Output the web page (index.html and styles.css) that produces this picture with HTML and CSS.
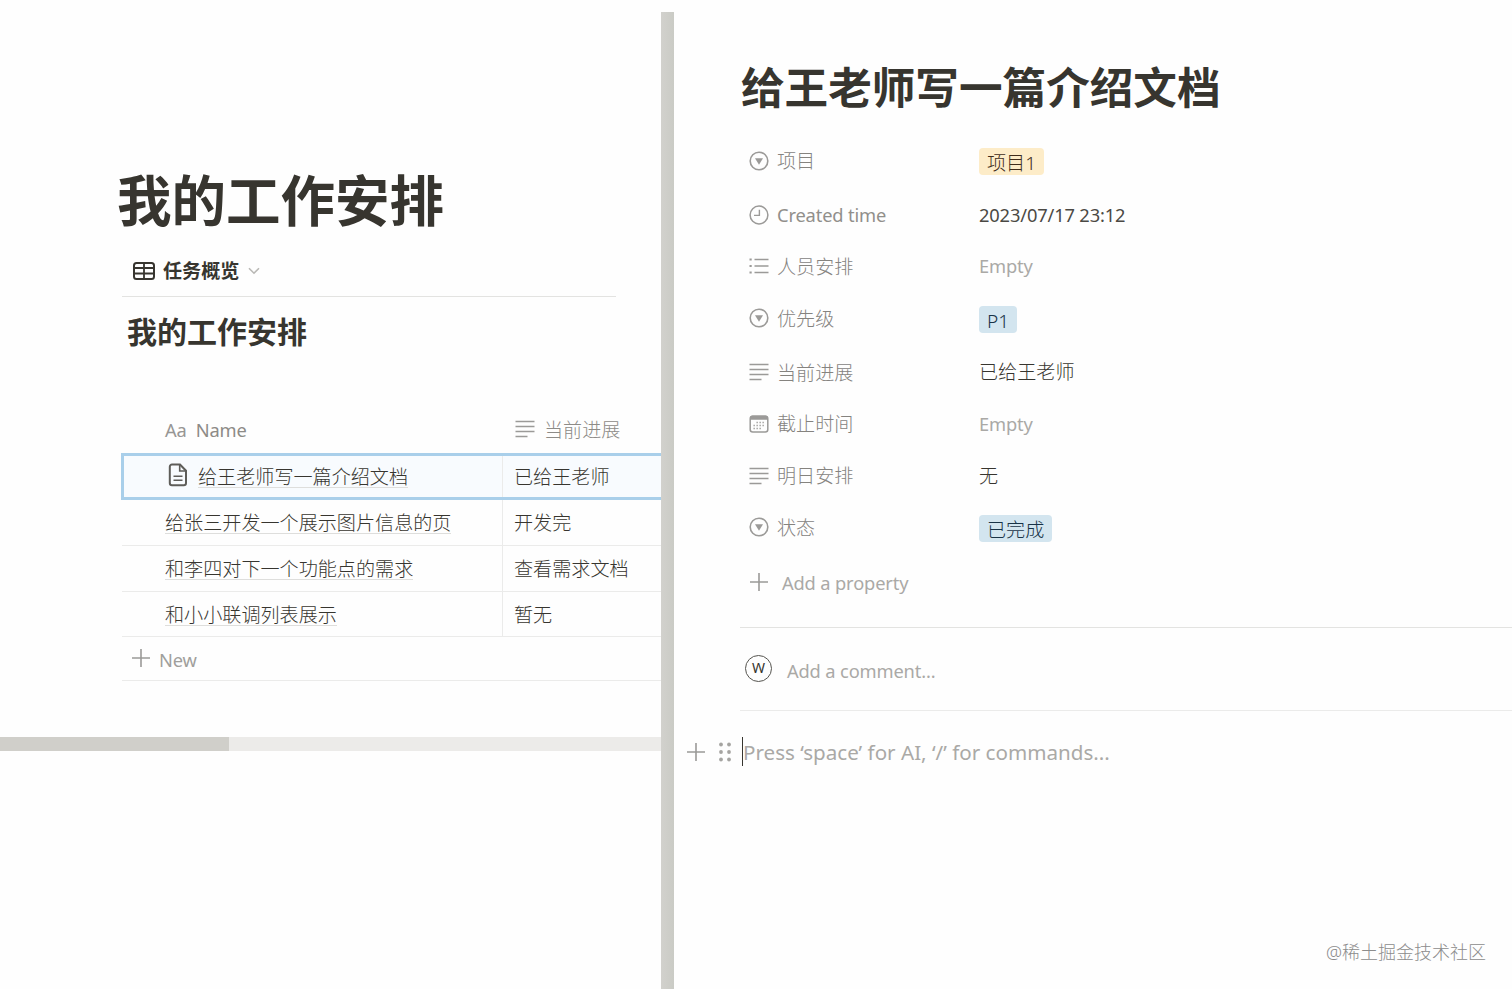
FILE: index.html
```html
<!DOCTYPE html>
<html lang="zh-CN">
<head>
  <meta charset="UTF-8">
  <meta name="viewport" content="width=device-width, initial-scale=1.0">
  <title>我的工作安排</title>
  <link rel="stylesheet" href="styles.css">
</head>
<body>
  <!-- shared icons -->
  <svg class="sprite" aria-hidden="true">
    <symbol id="icon-select" viewBox="0 0 20 20">
      <circle cx="10" cy="10" r="8.8" fill="none" stroke="currentColor" stroke-width="1.6"/>
      <path d="M6 7.300h8L10 13.700z" fill="currentColor"/>
    </symbol>
    <symbol id="icon-clock" viewBox="0 0 20 20">
      <circle cx="10" cy="10" r="8.9" fill="none" stroke="currentColor" stroke-width="1.5"/>
      <path d="M10.400 4.800v5.600H5" fill="none" stroke="currentColor" stroke-width="1.400"/>
    </symbol>
    <symbol id="icon-list" viewBox="0 0 20 20">
      <path d="M5.500 3.500H19.500M5.500 10H19.500M5.500 16.500H19.500" stroke="currentColor" stroke-width="1.500"/>
      <path d="M.5 3.500h2.200M.5 10h2.200M.5 16.500h2.200" stroke="currentColor" stroke-width="2.200"/>
    </symbol>
    <symbol id="icon-text" viewBox="0 0 20 20">
      <path d="M.5 2.500h19M.5 7.500h19M.5 12.500h19M.5 17.500h12" stroke="currentColor" stroke-width="1.500"/>
    </symbol>
    <symbol id="icon-date" viewBox="0 0 20 20">
      <rect x="1.200" y="2.200" width="17.600" height="15.800" rx="2.500" fill="none" stroke="currentColor" stroke-width="1.500"/>
      <path d="M1 5.800V4a2.500 2.500 0 0 1 2.500-2.500h13A2.500 2.500 0 0 1 19 4v1.800z" fill="currentColor"/>
      <path d="M7.500 8.500h9M4.500 11.500h12M4.500 14.500h9" stroke="currentColor" stroke-width="1.300" stroke-dasharray="1.300 1.700"/>
    </symbol>
    <symbol id="icon-plus" viewBox="0 0 20 20">
      <path d="M10 1v18M1 10h18" stroke="currentColor" stroke-width="1.600"/>
    </symbol>
  </svg>

  <div class="app">
    <main class="board">
      <h1 class="board-title">我的工作安排</h1>
      <div class="tabs">
        <svg class="tab-icon" viewBox="0 0 24 20" fill="none" stroke="currentColor" stroke-width="2">
          <rect x="2" y="2" width="20" height="16" rx="2.500"/>
          <path d="M2 7h20M2 12.500h20M12 2v16" stroke-width="1.800"/>
        </svg>
        <span>任务概览</span>
        <svg class="tab-arrow" viewBox="0 0 12 8" fill="none" stroke="currentColor" stroke-width="1.600">
          <path d="M1 1.200l5 5 5-5"/>
        </svg>
      </div>
      <h2 class="board-subtitle">我的工作安排</h2>

      <div class="table">
        <div class="row head">
          <div class="cell name"><span class="latin aa">Aa</span><span class="latin">Name</span></div>
          <div class="cell"><svg class="icon"><use href="#icon-text"/></svg>当前进展</div>
        </div>
        <div class="row selected">
          <div class="cell name">
            <svg class="page-icon" viewBox="0 0 20 24" fill="none" stroke="currentColor" stroke-width="2">
              <path d="M4 1.500h8l6 6.200v12.300a2.200 2.200 0 0 1-2.200 2.200H4A2.200 2.200 0 0 1 1.800 20V3.700A2.200 2.200 0 0 1 4 1.500z"/>
              <path d="M11.700 1.500v6.500H18" stroke-width="1.600"/>
              <path d="M5.500 13.200h9M5.500 17.200h9" stroke-width="1.500"/>
            </svg>
            <span class="link">给王老师写一篇介绍文档</span>
          </div>
          <div class="cell">已给王老师</div>
        </div>
        <div class="row">
          <div class="cell name"><span class="link">给张三开发一个展示图片信息的页</span></div>
          <div class="cell">开发完</div>
        </div>
        <div class="row">
          <div class="cell name"><span class="link">和李四对下一个功能点的需求</span></div>
          <div class="cell">查看需求文档</div>
        </div>
        <div class="row last">
          <div class="cell name"><span class="link">和小小联调列表展示</span></div>
          <div class="cell">暂无</div>
        </div>
        <div class="new-row"><svg class="icon"><use href="#icon-plus"/></svg><span class="latin">New</span></div>
      </div>

      <div class="scroll-x"><div class="scroll-x-thumb"></div></div>
    </main>

    <div class="scroll-y"></div>

    <section class="peek">
      <h1 class="peek-title">给王老师写一篇介绍文档</h1>
      <div class="props">
        <div class="prop">
          <div class="label"><svg class="icon"><use href="#icon-select"/></svg>项目</div>
          <span class="tag yellow">项目1</span>
        </div>
        <div class="prop gap">
          <div class="label"><svg class="icon"><use href="#icon-clock"/></svg><span class="latin">Created time</span></div>
          <span class="latin time">2023/07/17 23:12</span>
        </div>
        <div class="prop">
          <div class="label"><svg class="icon"><use href="#icon-list"/></svg>人员安排</div>
          <span class="latin empty">Empty</span>
        </div>
        <div class="prop">
          <div class="label"><svg class="icon"><use href="#icon-select"/></svg>优先级</div>
          <span class="tag blue">P1</span>
        </div>
        <div class="prop gap">
          <div class="label"><svg class="icon"><use href="#icon-text"/></svg>当前进展</div>
          <span class="value">已给王老师</span>
        </div>
        <div class="prop">
          <div class="label"><svg class="icon"><use href="#icon-date"/></svg>截止时间</div>
          <span class="latin empty">Empty</span>
        </div>
        <div class="prop">
          <div class="label"><svg class="icon"><use href="#icon-text"/></svg>明日安排</div>
          <span class="value">无</span>
        </div>
        <div class="prop">
          <div class="label"><svg class="icon"><use href="#icon-select"/></svg>状态</div>
          <span class="tag blue">已完成</span>
        </div>
        <div class="prop add"><svg class="icon"><use href="#icon-plus"/></svg><span class="latin add-text">Add a property</span></div>
      </div>

      <div class="comment">
        <span class="avatar">W</span>
        <span class="latin comment-text">Add a comment...</span>
      </div>

      <div class="editor">
        <svg class="icon"><use href="#icon-plus"/></svg>
        <svg class="drag" viewBox="0 0 12 20" fill="currentColor">
          <circle cx="2" cy="2.500" r="1.900"/><circle cx="10" cy="2.500" r="1.900"/>
          <circle cx="2" cy="10" r="1.900"/><circle cx="10" cy="10" r="1.900"/>
          <circle cx="2" cy="17.500" r="1.900"/><circle cx="10" cy="17.500" r="1.900"/>
        </svg>
        <span class="caret"></span>
        <span class="latin placeholder">Press ‘space’ for AI, ‘/’ for commands...</span>
      </div>

      <div class="watermark">@稀土掘金技术社区</div>
    </section>
  </div>
</body>
</html>
```
FILE: styles.css
```css
* {
  box-sizing: border-box;
}

body {
  margin: 0;
  font-family: "Noto Sans", "Noto Sans CJK SC", sans-serif;
  font-size: 19.1px;
  font-weight: 300;
  line-height: 23px;
  color: #37352f;
  background: #fefefe;
}

h1,
h2 {
  margin: 0;
  font-weight: 700;
  white-space: nowrap;
}

.sprite {
  display: none;
}

.icon {
  width: 20px;
  height: 20px;
  flex: none;
  color: #9b9a98;
}

.latin {
  font-size: 18.3px;
  font-weight: 400;
  letter-spacing: -0.15px;
}

.app {
  display: flex;
  height: 989px;
  overflow: hidden;
}

/* left side */
.board {
  width: 661px;
  flex: none;
  padding-top: 160px;
  overflow: hidden;
}

.board-title {
  margin-left: 117px;
  font-size: 54.5px;
  line-height: 80px;
}

.tabs {
  display: flex;
  align-items: center;
  width: 494px;
  height: 57px;
  margin-left: 122px;
  padding: 6px 0 0 10px;
  border-bottom: 1px solid #e3e3e1;
  font-weight: 700;
}

.tabs span {
  padding-top: 1px;
}

.tab-icon {
  width: 24px;
  height: 20px;
  margin-right: 7px;
}

.tab-arrow {
  width: 12px;
  height: 8px;
  margin-left: 9px;
  color: #b9b8b5;
}

.board-subtitle {
  margin: 11px 0 0 127px;
  font-size: 30px;
  line-height: 48px;
}

.table {
  margin: 50px 0 0 122px;
}

.row {
  display: flex;
  height: 46px;
  border-bottom: 1px solid #ebebea;
}

.row.head {
  height: 47px;
  border-bottom: none;
  color: #8d8b87;
}

.row.selected {
  height: 47px;
  margin-left: -1px;
  border: 3px solid #a9cfea;
  border-right: none;
  background: #f8fbfe;
}

.row.selected .name {
  width: 379px;
}

.row.last {
  height: 45px;
}

.cell {
  display: flex;
  align-items: center;
  padding: 2px 0 0 11px;
  white-space: nowrap;
}

.cell.name {
  width: 381px;
  flex: none;
  padding-left: 43px;
  border-right: 1px solid #ebebea;
}

.head .name {
  padding-top: 0;
  border-right-color: transparent;
}

.head .icon {
  margin: 0 9px 3px 1px;
}

.aa {
  margin-right: 9px;
  color: #979694;
}

.link {
  line-height: 20px;
  border-bottom: 1px solid #dededc;
}

.selected .cell.name {
  padding-left: 44px;
}

.page-icon {
  width: 20px;
  height: 24px;
  margin: 0 10px 5px 0;
  color: #5e5d59;
}

.new-row {
  display: flex;
  align-items: center;
  gap: 8px;
  height: 44px;
  padding: 2px 0 0 9px;
  border-bottom: 1px solid #ebebea;
  color: #a09f9c;
}

.new-row .icon {
  margin-bottom: 4px;
}

.scroll-x {
  height: 14px;
  margin-top: 56px;
  background: #ecebe9;
}

.scroll-x-thumb {
  width: 229px;
  height: 14px;
  background: #d0cfca;
}

.scroll-y {
  width: 13px;
  flex: none;
  margin-top: 12px;
  background: linear-gradient(to right, #d2d1cd, #cacbc5);
}

/* right side */
.peek {
  position: relative;
  flex: 1;
  padding-top: 54px;
}

.peek-title {
  margin-left: 67px;
  font-size: 43.6px;
  line-height: 66px;
}

.props {
  margin-left: 66px;
  padding: 15px 0 17px 9px;
  border-bottom: 1px solid #e3e3e1;
}

.prop {
  display: flex;
  align-items: center;
  height: 51.8px;
  white-space: nowrap;
}

.prop.gap {
  margin-top: 2px;
}

.label {
  display: flex;
  align-items: center;
  gap: 8px;
  width: 230px;
  padding-top: 2px;
  color: #85837f;
}

.label .icon {
  margin-bottom: 2px;
}

.label .latin {
  margin-bottom: 2px;
  color: #918f8b;
}

.value {
  padding-top: 1px;
}

.time {
  color: #4b4944;
}

.empty,
.add-text,
.comment-text {
  color: #aaa9a6;
}

.empty {
  padding-bottom: 1px;
}

.add-text {
  padding-top: 2px;
}

.tag {
  height: 27px;
  margin-top: 2px;
  padding: 0 8px;
  border-radius: 4px;
  line-height: 30px;
}

.tag.yellow {
  background: #fdecc8;
  color: #402c1b;
}

.tag.blue {
  background: #d3e5ef;
  color: #183347;
}

.prop.add {
  height: 56.6px;
  gap: 13px;
}

.comment {
  display: flex;
  align-items: center;
  gap: 15px;
  height: 83px;
  margin-left: 66px;
  padding-left: 5px;
  border-bottom: 1px solid #ebebea;
}

.comment-text {
  padding-top: 4px;
}

.avatar {
  width: 27px;
  height: 27px;
  border: 1.5px solid #55544f;
  border-radius: 50%;
  font-size: 14px;
  font-weight: 400;
  line-height: 24px;
  text-align: center;
}

.editor {
  display: flex;
  align-items: center;
  height: 82px;
  padding-left: 12px;
}

.drag {
  width: 12px;
  height: 20px;
  margin-left: 13px;
  color: #a5a4a1;
}

.caret {
  width: 1px;
  height: 29px;
  margin-left: 11px;
  background: #37352f;
}

.placeholder {
  padding-top: 2px;
  font-size: 20.6px;
  letter-spacing: 0;
  color: #aaa9a6;
}

.watermark {
  position: absolute;
  right: 26px;
  bottom: 22px;
  font-size: 18px;
  line-height: 30px;
  color: #8c8c8c;
}
```
